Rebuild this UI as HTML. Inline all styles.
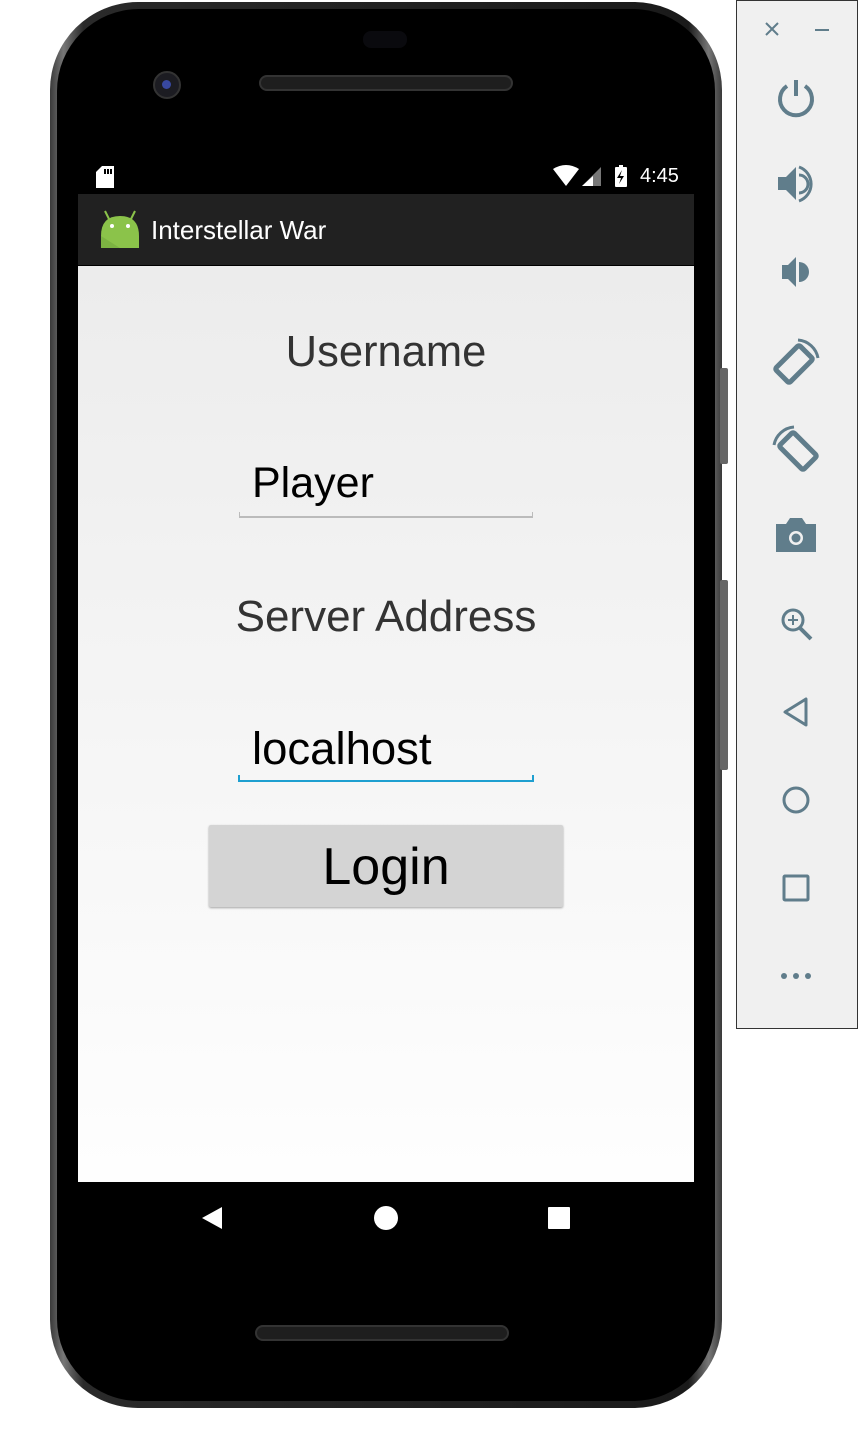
<!DOCTYPE html>
<html><head><meta charset="utf-8"><style>
*{margin:0;padding:0;box-sizing:border-box}
body{width:858px;height:1440px;background:#fff;position:relative;overflow:hidden;font-family:"Liberation Sans",sans-serif}
.a{position:absolute}
.t{position:absolute;left:78px;width:616px;text-align:center;white-space:nowrap}
</style></head><body>
<div class="a" style="left:50px;top:2px;width:672px;height:1406px;border-radius:88px;background:linear-gradient(90deg,#3a3a3a,#777 2%,#2a2a2a 5%,#1a1a1a 95%,#777 98%,#3a3a3a);"></div>
<div class="a" style="left:57px;top:9px;width:658px;height:1392px;border-radius:82px;background:#000;"></div>
<div class="a" style="left:720px;top:368px;width:8px;height:96px;background:#666;border-radius:2px"></div>
<div class="a" style="left:720px;top:580px;width:8px;height:190px;background:#666;border-radius:2px"></div>
<div class="a" style="left:363px;top:31px;width:44px;height:17px;border-radius:8px;background:#0a0a0e"></div>
<div class="a" style="left:153px;top:71px;width:28px;height:28px;border-radius:50%;background:#1c1c22;border:2px solid #333"></div>
<div class="a" style="left:162px;top:80px;width:9px;height:9px;border-radius:50%;background:#3848a0"></div>
<div class="a" style="left:259px;top:75px;width:254px;height:16px;border-radius:8px;background:#1e1e1e;border:2px solid #333"></div>
<div class="a" style="left:255px;top:1325px;width:254px;height:16px;border-radius:8px;background:#1e1e1e;border:2px solid #333"></div>
<svg class="a" style="left:96px;top:166px" width="18" height="22" viewBox="0 0 18 22"><path d="M6 0H18V22H0V6Z" fill="#fff"/><rect x="8" y="3" width="2" height="5" fill="#000"/><rect x="11" y="3" width="2" height="5" fill="#000"/><rect x="14" y="3" width="2" height="5" fill="#000"/></svg>
<svg class="a" style="left:553px;top:165px" width="80" height="22" viewBox="0 0 80 22"><path d="M0 4Q13-4 26 4L13 21Z" fill="#fff"/><path d="M48 2V21H29Z" fill="#777"/><path d="M40 11V21H29Z" fill="#fff"/><rect x="62" y="2" width="12" height="20" rx="1" fill="#fff"/><rect x="66" y="0" width="4" height="3" fill="#fff"/><path d="M69 5L64 13H68L66 19L71 11H67Z" fill="#000"/></svg>
<div class="a" style="left:640px;top:165px;color:#fff;font-size:20px">4:45</div>
<div class="a" style="left:78px;top:194px;width:616px;height:71px;background:#212121;box-shadow:0 2px 4px rgba(0,0,0,.4)"></div>
<svg class="a" style="left:99px;top:208px" width="42" height="42" viewBox="0 0 42 42"><path d="M6 3L10 11M36 3L32 11" stroke="#8bc34a" stroke-width="2"/><path d="M2 28Q2 8 21 8Q40 8 40 28V40H2Z" fill="#8bc34a"/><path d="M2 28L21 40H2Z" fill="#7cb342"/><circle cx="13" cy="18" r="2" fill="#fff"/><circle cx="29" cy="18" r="2" fill="#fff"/></svg>
<div class="a" style="left:151px;top:215px;color:#fff;font-size:26px">Interstellar War</div>
<div class="a" style="left:78px;top:266px;width:616px;height:916px;background:linear-gradient(#ececec,#fefefe)"></div>
<div class="t" style="top:328px;font-size:43.5px;color:#333">Username</div>
<div class="a" style="left:252px;top:459px;font-size:43px;color:#000">Player</div>
<div class="a" style="left:239px;top:516px;width:294px;height:2px;background:#bbb"></div>
<div class="a" style="left:239px;top:512px;width:1px;height:5px;background:#bbb"></div>
<div class="a" style="left:532px;top:512px;width:1px;height:5px;background:#bbb"></div>
<div class="t" style="top:592px;font-size:44px;color:#333">Server Address</div>
<div class="a" style="left:252px;top:723px;font-size:45.5px;color:#000">localhost</div>
<div class="a" style="left:238px;top:780px;width:296px;height:2px;background:#1e9fd0"></div>
<div class="a" style="left:238px;top:775px;width:2px;height:6px;background:#1e9fd0"></div>
<div class="a" style="left:532px;top:775px;width:2px;height:6px;background:#1e9fd0"></div>
<div class="a" style="left:209px;top:825px;width:354px;height:82px;background:#d4d4d4;border-radius:2px;box-shadow:0 1px 2px rgba(0,0,0,.35);text-align:center;font-size:52px;line-height:84px;color:#000">Login</div>
<svg class="a" style="left:200px;top:1204px" width="380" height="28" viewBox="0 0 380 28"><path d="M22 3V25L2 14Z" fill="#fff"/><circle cx="186" cy="14" r="12" fill="#fff"/><rect x="348" y="3" width="22" height="22" rx="1" fill="#fff"/></svg>
<div class="a" style="left:736px;top:0;width:122px;height:1029px;background:#f0f0f0;border:1px solid #333"></div>
<svg class="a" style="left:736px;top:0" width="122" height="1029" viewBox="0 0 122 1029" fill="#607d8b" stroke="#607d8b">
<path d="M30 23L42 35M42 23L30 35" stroke-width="2" fill="none"/><path d="M79 30H93" stroke-width="2"/>
<path d="M60 80V96" stroke-width="4" fill="none"/><path d="M51 86A16 16 0 1 0 69 86" stroke-width="4" fill="none"/>
<path d="M42 177H50L60 167V200L50 190H42Z" stroke="none"/><path d="M63 175A9 9 0 0 1 63 193" stroke-width="3" fill="none"/><path d="M63 167A18 18 0 0 1 63 201" stroke-width="3" fill="none"/>
<path d="M46 265H52L60 257V287L52 279H46Z" stroke="none"/><path d="M63 262A10 10 0 0 1 63 282Z" stroke="none"/>
<g transform="translate(58 364) rotate(45)"><rect x="-10" y="-17" width="20" height="34" rx="2" fill="none" stroke-width="5"/></g><path d="M62 340A22 22 0 0 1 82 358" stroke-width="3" fill="none"/>
<g transform="translate(62 451) rotate(-45)"><rect x="-10" y="-17" width="20" height="34" rx="2" fill="none" stroke-width="5"/></g><path d="M58 427A22 22 0 0 0 38 445" stroke-width="3" fill="none"/>
<path d="M40 524H50L54 518H66L70 524H80V552H40Z" stroke="none"/><circle cx="60" cy="538" r="7" fill="#f0f0f0" stroke="none"/><circle cx="60" cy="538" r="4.5" stroke="none"/>
<circle cx="57" cy="620" r="10" fill="none" stroke-width="3"/><path d="M64 628L75 639" stroke-width="4"/><path d="M57 615V625M52 620H62" stroke-width="2"/>
<path d="M70 699V725L49 712Z" fill="none" stroke-width="3" stroke-linejoin="round"/>
<circle cx="60" cy="800" r="12" fill="none" stroke-width="3"/>
<rect x="48" y="876" width="24" height="24" rx="1" fill="none" stroke-width="3"/>
<circle cx="48" cy="976" r="3" stroke="none"/><circle cx="60" cy="976" r="3" stroke="none"/><circle cx="72" cy="976" r="3" stroke="none"/>
</svg>
</body></html>
